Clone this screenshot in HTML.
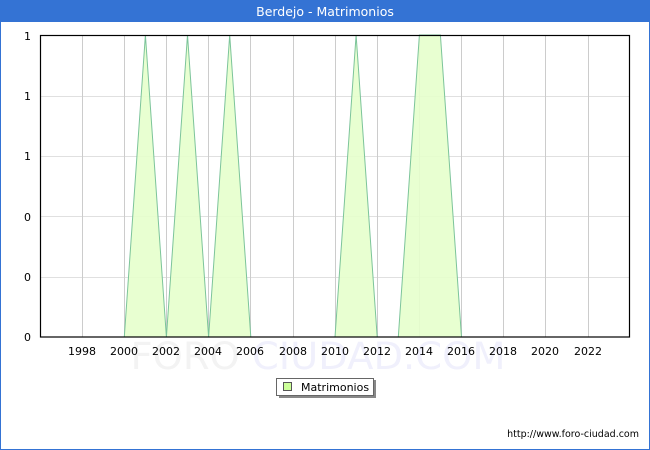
<!DOCTYPE html>
<html><head><meta charset="utf-8"><style>
html,body{margin:0;padding:0;background:#fff}
svg{display:block}
text{font-family:"DejaVu Sans","Liberation Sans",sans-serif}
</style></head><body>
<svg width="650" height="450" xmlns="http://www.w3.org/2000/svg">
<rect x="0.5" y="0.5" width="649" height="449" fill="#fff" stroke="#3473d4"/>
<rect x="0" y="0" width="650" height="22" fill="#3473d4"/>
<text x="325" y="16" font-size="12.5" fill="#fff" text-anchor="middle">Berdejo - Matrimonios</text>
<text x="318" y="369" font-size="37" text-anchor="middle" textLength="375" lengthAdjust="spacingAndGlyphs"><tspan fill="#f3f3f3">FORO </tspan><tspan fill="#f0f0fc">CIUDAD.COM</tspan></text>
<g stroke="#e0e0e0" stroke-width="1">
<line x1="40" y1="96.5" x2="630" y2="96.5"/>
<line x1="40" y1="156.5" x2="630" y2="156.5"/>
<line x1="40" y1="216.5" x2="630" y2="216.5"/>
<line x1="40" y1="277.5" x2="630" y2="277.5"/>
</g>
<g stroke="#cccccc" stroke-width="1">
<line x1="82.5" y1="35" x2="82.5" y2="337"/>
<line x1="124.5" y1="35" x2="124.5" y2="337"/>
<line x1="166.5" y1="35" x2="166.5" y2="337"/>
<line x1="208.5" y1="35" x2="208.5" y2="337"/>
<line x1="250.5" y1="35" x2="250.5" y2="337"/>
<line x1="293.5" y1="35" x2="293.5" y2="337"/>
<line x1="335.5" y1="35" x2="335.5" y2="337"/>
<line x1="377.5" y1="35" x2="377.5" y2="337"/>
<line x1="419.5" y1="35" x2="419.5" y2="337"/>
<line x1="461.5" y1="35" x2="461.5" y2="337"/>
<line x1="503.5" y1="35" x2="503.5" y2="337"/>
<line x1="545.5" y1="35" x2="545.5" y2="337"/>
<line x1="588.5" y1="35" x2="588.5" y2="337"/>
</g>
<path d="M124.3 337 L145.4 35 L166.4 337 L187.5 35 L208.6 337 L229.7 35 L250.8 337 Z M335 337 L356.1 35 L377.2 337 Z M398.3 337 L419.4 35 L440.4 35 L461.5 337 Z" fill="#e6ffcc" fill-opacity="0.9" stroke="#7cc49a" stroke-width="1"/>
<rect x="40.5" y="35.5" width="589" height="301.5" fill="none" stroke="#000" stroke-width="1.2"/>
<g font-size="11" fill="#000" text-anchor="end">
<text x="31" y="40">1</text>
<text x="31" y="100">1</text>
<text x="31" y="160">1</text>
<text x="31" y="221">0</text>
<text x="31" y="281">0</text>
<text x="31" y="341">0</text>
</g>
<g font-size="11" fill="#000" text-anchor="middle">
<text x="82" y="355">1998</text><text x="124" y="355">2000</text><text x="166" y="355">2002</text>
<text x="208" y="355">2004</text><text x="250" y="355">2006</text><text x="293" y="355">2008</text>
<text x="335" y="355">2010</text><text x="377" y="355">2012</text><text x="419" y="355">2014</text>
<text x="461" y="355">2016</text><text x="503" y="355">2018</text><text x="545" y="355">2020</text>
<text x="588" y="355">2022</text>
</g>
<rect x="279" y="380" width="97" height="18" fill="#888"/>
<rect x="276.5" y="378.5" width="97" height="17" fill="#fff" stroke="#666"/>
<rect x="283.5" y="382.5" width="8" height="8" fill="#ccff99" stroke="#555"/>
<text x="301" y="391" font-size="11" fill="#000">Matrimonios</text>
<text x="639" y="437" font-size="9.5" fill="#000" text-anchor="end">http://www.foro-ciudad.com</text>
</svg>
</body></html>
